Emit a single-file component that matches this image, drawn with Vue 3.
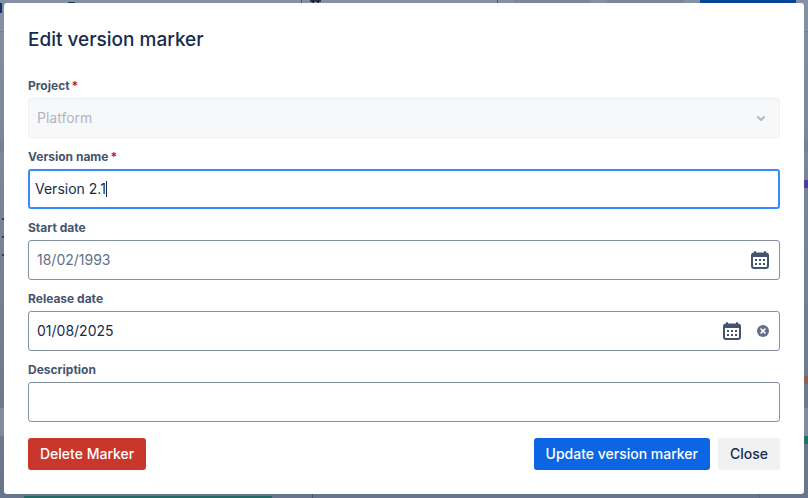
<template>
  <div class="page">
    <!-- board behind the dialog -->
    <div class="board" aria-hidden="true">
      <div class="toolbar">
        <span class="tool-mark dark"></span>
        <span class="tool-mark round"></span>
        <svg class="hash" width="12" height="3" viewBox="0 0 12 3">
          <path d="M0 1h11M3.5 0L3 3M8.5 0L8 3" fill="none" stroke="currentColor" stroke-width="1.6" />
        </svg>
        <span class="tool tool-a"></span>
        <span class="tool tool-b"></span>
        <span class="tool tool-primary"></span>
      </div>
      <div class="lane lane-head"></div>
      <div class="lane lane-gap"></div>
      <span class="divider divider-a"></span>
      <span class="divider divider-b"></span>
      <span class="divider divider-c"></span>
      <span class="divider divider-d"></span>
      <span class="handle handle-a"></span>
      <span class="handle handle-b"></span>
      <span class="handle handle-c"></span>
      <span class="bar bar-purple"></span>
      <span class="bar bar-orange"></span>
      <span class="bar bar-green"></span>
      <span class="bar bar-bottom"></span>
    </div>

    <form class="dialog" role="dialog" aria-labelledby="dialog-title" @submit.prevent>
      <h1 id="dialog-title">Edit version marker</h1>

      <div class="field">
        <label for="project">Project<span class="required">*</span></label>
        <div class="control disabled">
          <select id="project" v-model="form.project" disabled>
            <option>Platform</option>
          </select>
          <svg class="chevron" width="24" height="24" viewBox="0 0 24 24">
            <path d="M9 11l3 3 3-3" fill="none" stroke="currentColor" stroke-width="2" stroke-linecap="round" stroke-linejoin="round" />
          </svg>
        </div>
      </div>

      <div class="field">
        <label for="name">Version name<span class="required">*</span></label>
        <div class="control active">
          <input id="name" ref="nameInput" v-model="form.name" type="text" autocomplete="off" spellcheck="false">
          <span v-if="form.name === savedName" class="caret"></span>
        </div>
      </div>

      <div v-for="d in dates" :key="d.key" class="field">
        <label :for="d.key">{{ d.label }}</label>
        <div class="control">
          <input :id="d.key" v-model="form[d.key]" type="text" :placeholder="d.placeholder">
          <button type="button" class="icon-btn calendar" :aria-label="`Pick ${d.label}`">
            <svg width="18" height="18" viewBox="0 0 18 18">
              <path fill="currentColor" fill-rule="evenodd" d="M3 1.5V1a1 1 0 0 1 2 0v.5h8V1a1 1 0 0 1 2 0v.5a3 3 0 0 1 3 3V15a3 3 0 0 1-3 3H3a3 3 0 0 1-3-3V4.5a3 3 0 0 1 3-3zM2 6v9a1 1 0 0 0 1 1h12a1 1 0 0 0 1-1V6z" />
              <path fill="currentColor" d="M4 8h2v2H4zM8 8h2v2H8zM12 8h2v2h-2zM4 12h2v2H4zM8 12h2v2H8zM12 12h2v2h-2z" />
            </svg>
          </button>
          <button v-if="form[d.key]" type="button" class="icon-btn clear" :aria-label="`Clear ${d.label}`" @click="form[d.key] = ''">
            <svg width="12" height="12" viewBox="0 0 12 12">
              <circle cx="6" cy="6" r="6" fill="currentColor" />
              <path d="M4 4l4 4M8 4L4 8" stroke="#fff" stroke-width="1.6" stroke-linecap="round" />
            </svg>
          </button>
        </div>
      </div>

      <div class="field">
        <label for="description">Description</label>
        <div class="control">
          <input id="description" v-model="form.description" type="text">
        </div>
      </div>

      <div class="actions">
        <button type="button" class="btn danger">Delete Marker</button>
        <button type="submit" class="btn primary">Update version marker</button>
        <button type="button" class="btn subtle">Close</button>
      </div>
    </form>
  </div>
</template>

<script setup>
import { reactive, ref, onMounted } from 'vue'

const savedName = 'Version 2.1'
const nameInput = ref(null)

const form = reactive({
  project: 'Platform',
  name: savedName,
  startDate: '',
  releaseDate: '01/08/2025',
  description: '',
})

const dates = [
  { key: 'startDate', label: 'Start date', placeholder: '18/02/1993' },
  { key: 'releaseDate', label: 'Release date', placeholder: '18/02/1993' },
]

onMounted(() => {
  nameInput.value.focus()
})
</script>

<style>
body {
  background: #758196;
}
</style>

<style scoped>
.page {
  position: relative;
  box-sizing: border-box;
  min-height: 100vh;
  padding: 3px 4px 4px;
  overflow: hidden;
  font-family: Inter, 'Liberation Sans', sans-serif;
  color: #172b4d;
}

.board {
  position: absolute;
  inset: 0;
  background: linear-gradient(#828ea2, #69758c);
}

.toolbar {
  box-sizing: border-box;
  height: 32px;
  background: #8490a3;
  border-bottom: 1px solid #707d93;
}

.lane {
  position: absolute;
  left: 0;
  right: 0;
}

.lane-head {
  top: 140px;
  height: 12px;
  background: #748196;
}

.lane-gap {
  top: 408px;
  height: 28px;
  background: #808ba2;
}

.tool,
.tool-mark,
.divider,
.handle,
.bar {
  position: absolute;
}

.tool {
  top: 0;
  height: 24px;
  background: #7b879b;
}

.tool-a {
  left: 514px;
  width: 77px;
}

.tool-b {
  left: 607px;
  width: 77px;
}

.tool-primary {
  left: 700px;
  width: 96px;
  background: #08439a;
}

.tool-mark {
  background: #1b3262;
}

.dark {
  top: 3px;
  left: 0;
  width: 2px;
  height: 10px;
}

.round {
  top: 2px;
  left: 68px;
  width: 7px;
  height: 2px;
}

.hash {
  position: absolute;
  top: 0;
  left: 310px;
  color: #111d33;
}

.divider {
  width: 1px;
  height: 10px;
  background: #455470;
}

.divider-a {
  top: 0;
  left: 301px;
}

.divider-b {
  top: 0;
  left: 497px;
}

.divider-c {
  bottom: 0;
  left: 312px;
}

.divider-d {
  bottom: 0;
  left: 759px;
  background: #5d6980;
}

.handle {
  left: 2px;
  width: 4px;
  height: 2px;
  background: #2c3c60;
}

.handle-a {
  top: 218px;
}

.handle-b {
  top: 236px;
}

.handle-c {
  top: 254px;
}

.bar {
  right: 0;
  width: 8px;
  height: 8px;
}

.bar-purple {
  top: 180px;
  background: #4d3d99;
}

.bar-orange {
  top: 376px;
  background: #8c6355;
}

.bar-green {
  top: 436px;
  background: #1f7468;
}

.bar-bottom {
  bottom: 0;
  left: 24px;
  width: 248px;
  height: 2px;
  background: #1d6b62;
}

.dialog {
  position: relative;
  padding: 24px;
  background: #fff;
  border-radius: 3px;
}

h1 {
  margin: 0 0 25px;
  font-size: 19px;
  line-height: 26px;
  font-weight: 500;
}

.field {
  margin-bottom: 11px;
}

label {
  display: block;
  margin-bottom: 4px;
  font-size: 12px;
  line-height: 16px;
  font-weight: 700;
  color: #44546f;
}

.required {
  padding-left: 2px;
  color: #ae2a19;
}

.control {
  position: relative;
  display: flex;
  align-items: center;
  box-sizing: border-box;
  height: 40px;
  padding: 0 10px 0 8px;
  border: 1px solid #8590a2;
  border-radius: 3px;
}

.control.active {
  padding: 0 5px;
  border: 2px solid #388bff;
}

.control.disabled {
  padding-right: 6px;
  background: #f7f8f9;
  border-color: #eff0f2;
}

input,
select {
  flex: 1;
  min-width: 0;
  height: 24px;
  padding: 0;
  border: 0;
  outline: 0;
  background: transparent;
  font-family: inherit;
  font-size: 14px;
  line-height: 20px;
  color: #172b4d;
}

input {
  box-sizing: border-box;
  padding-bottom: 2px;
}

.active input {
  caret-color: transparent;
}

input::placeholder {
  color: #626f86;
  opacity: 1;
}

select {
  appearance: none;
  opacity: 1;
  color: #b0b6c2;
}

.caret {
  position: absolute;
  top: 10px;
  left: 76px;
  width: 1px;
  height: 16px;
  background: #172b4d;
}

.chevron {
  color: #b3b9c4;
}

.icon-btn {
  display: flex;
  padding: 0;
  border: 0;
  background: transparent;
  cursor: pointer;
}

.calendar {
  color: #44546f;
}

.clear {
  margin-left: 16px;
  color: #626f86;
}

.actions {
  display: flex;
  gap: 8px;
  padding-top: 5px;
}

.btn {
  height: 32px;
  padding: 0 12px;
  border: 0;
  border-radius: 3px;
  font-family: inherit;
  font-size: 14px;
  line-height: 20px;
  font-weight: 500;
  white-space: nowrap;
  cursor: pointer;
}

.danger {
  margin-right: auto;
  background: #c9372c;
  color: #fff;
}

.primary {
  background: #0c66e4;
  color: #fff;
}

.subtle {
  background: #f0f1f3;
  color: #172b4d;
}
</style>
